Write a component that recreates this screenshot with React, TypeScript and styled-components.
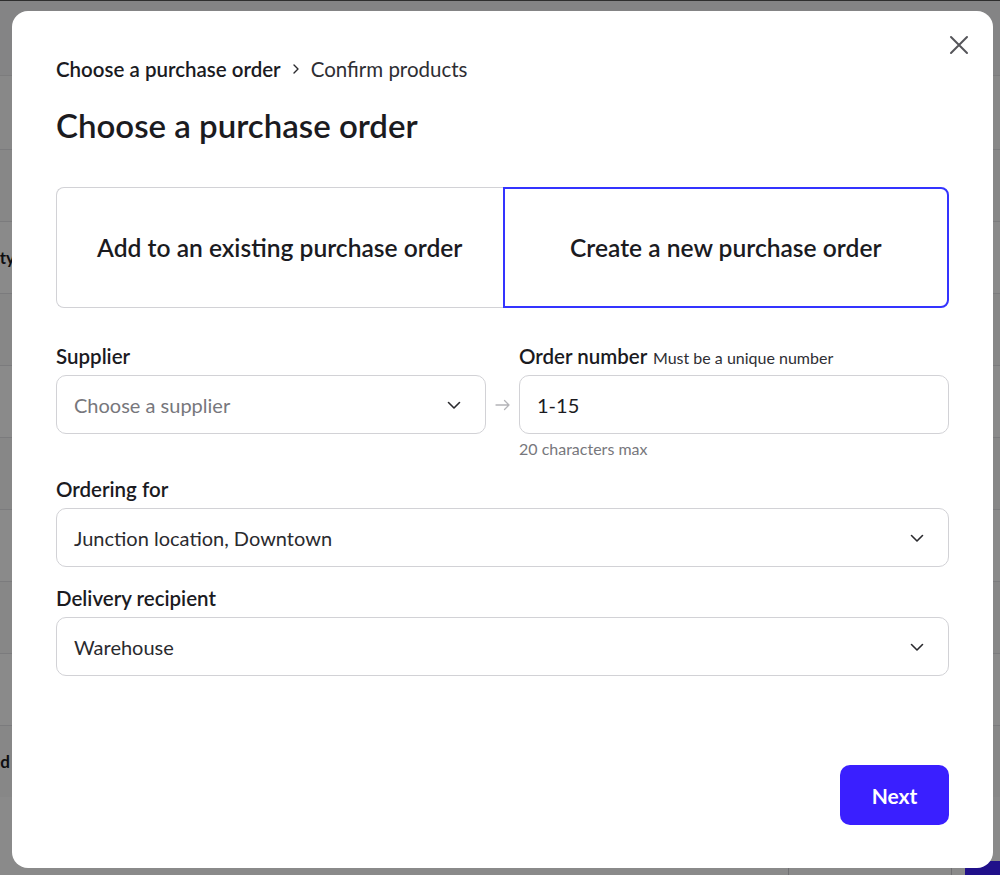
import styled, { createGlobalStyle } from 'styled-components';

const GlobalStyle = createGlobalStyle`
  * { box-sizing: border-box; }
  html, body { margin: 0; padding: 0; }
  body {
    font-family: Lato, "Noto Sans", "Liberation Sans", sans-serif;
    color: #1b1b1f;
    background: #ffffff;
    overflow: hidden;
  }
`;

const rows = [
  { label: '', edge: 13, key: 'r0' },
  { label: 'Quantity', edge: 15, key: 'r1' },
  { label: '', edge: 13, key: 'r2' },
  { label: '', edge: 13, key: 'r3' },
  { label: '', edge: 13, key: 'r4' },
  { label: '', edge: 13, key: 'r5' },
  { label: '', edge: 13, key: 'r6' },
  { label: '', edge: 13, key: 'r7' },
  { label: 'Received', edge: 10, key: 'r8' },
];

function ChevronDown() {
  return (
    <svg width="16" height="16" viewBox="0 0 16 16" fill="none">
      <path d="M2.5 5.5L8 11l5.5-5.5" stroke="#2a2a2e" strokeWidth="1.6" strokeLinecap="round" strokeLinejoin="round" />
    </svg>
  );
}

export default function App() {
  return (
    <>
      <GlobalStyle />
      <Page>
        <PageHeader>
          <PageLink>+ Add</PageLink>
        </PageHeader>
        <PageSub />
        <Table>
          {rows.map(r => (
            <TableRow key={r.key}>
              <Cell $edge={r.edge}>{r.label}</Cell>
            </TableRow>
          ))}
        </Table>
        <Footer>
          <GhostButton>Clear selection</GhostButton>
          <PrimaryPageButton>Create</PrimaryPageButton>
        </Footer>
      </Page>

      <Overlay>
        <Modal>
          <CloseButton aria-label="Close">
            <svg width="22" height="22" viewBox="0 0 22 22" fill="none">
              <path d="M3 3l16 16M19 3L3 19" stroke="#55555a" strokeWidth="2" strokeLinecap="round" />
            </svg>
          </CloseButton>

          <Breadcrumb>
            <Crumb $active>Choose a purchase order</Crumb>
            <CrumbSep>
              <svg width="10" height="12" viewBox="0 0 10 12" fill="none">
                <path d="M3 2l4 4-4 4" stroke="#2a2a2e" strokeWidth="1.4" strokeLinecap="round" strokeLinejoin="round" />
              </svg>
            </CrumbSep>
            <Crumb>Confirm products</Crumb>
          </Breadcrumb>

          <Title>Choose a purchase order</Title>

          <Choices>
            <Choice $side="left">Add to an existing purchase order</Choice>
            <Choice $side="right" $selected>Create a new purchase order</Choice>
          </Choices>

          <PairRow>
            <Field>
              <Label>Supplier</Label>
              <Select>
                <Placeholder>Choose a supplier</Placeholder>
                <ChevronDown />
              </Select>
            </Field>
            <Arrow>
              <svg width="16" height="12" viewBox="0 0 16 12" fill="none">
                <path d="M1 6h13M9.5 1.5L14 6l-4.5 4.5" stroke="#b4b4b8" strokeWidth="1.3" strokeLinecap="round" strokeLinejoin="round" />
              </svg>
            </Arrow>
            <Field>
              <Label>
                Order number <Hint>Must be a unique number</Hint>
              </Label>
              <Input>1-15</Input>
              <Helper>20 characters max</Helper>
            </Field>
          </PairRow>

          <Field $gap={17}>
            <Label>Ordering for</Label>
            <Select>
              <Value>Junction location, Downtown</Value>
              <ChevronDown />
            </Select>
          </Field>

          <Field $gap={18}>
            <Label>Delivery recipient</Label>
            <Select>
              <Value>Warehouse</Value>
              <ChevronDown />
            </Select>
          </Field>

          <Actions>
            <NextButton>Next</NextButton>
          </Actions>
        </Modal>
      </Overlay>
    </>
  );
}

/* underlying page */

const Page = styled.div`
  height: 100vh;
  display: flex;
  flex-direction: column;
  background: #ffffff;
`;

const PageHeader = styled.div`
  height: 75px;
  display: flex;
  justify-content: flex-end;
  align-items: flex-end;
  background: #f4f4f6;
`;

const PageLink = styled.span`
  color: #1a1ae0;
  font-size: 16px;
  font-weight: 700;
  margin-bottom: -18px;
  margin-right: -34px;
`;

const PageSub = styled.div`
  height: 74px;
  border-top: 1px solid #e6e6e8;
  background: #fbfbfc;
`;

const Table = styled.div`
  flex: 1;
  display: flex;
  flex-direction: column;
`;

const TableRow = styled.div`
  height: 72px;
  flex-shrink: 0;
  border-top: 1px solid #e4e4e7;
  display: flex;
  align-items: center;
  &:nth-child(odd) { background: #fafafa; }
`;

const Cell = styled.div<{ $edge: number }>`
  width: ${p => p.$edge}px;
  display: flex;
  justify-content: flex-end;
  white-space: nowrap;
  font-size: 17px;
  font-weight: 700;
  color: #1b1b1f;
`;

const Footer = styled.div`
  position: fixed;
  left: 0;
  right: 0;
  bottom: 0;
  height: 22px;
  display: flex;
  justify-content: flex-end;
  align-items: flex-start;
  gap: 13px;
  padding-top: 8px;
  margin-right: -62px;
  background: #ffffff;
`;

const GhostButton = styled.button`
  height: 48px;
  padding: 0 22px;
  border: 1px solid #cfcfd4;
  border-radius: 8px;
  background: #ffffff;
  font: 700 18px Lato, "Liberation Sans", sans-serif;
  color: #1b1b1f;
`;

const PrimaryPageButton = styled.button`
  height: 48px;
  padding: 0 22px;
  border: none;
  border-radius: 8px;
  background: #3b1fff;
  color: #ffffff;
  font: 700 18px Lato, "Liberation Sans", sans-serif;
`;

/* modal */

const Overlay = styled.div`
  position: fixed;
  inset: 0;
  background: rgba(0, 0, 0, 0.46);
  border-top: 1px solid #2e2e2e;
  padding: 10px 7px 7px 12px;
  display: flex;
`;

const Modal = styled.div`
  position: relative;
  flex: 1;
  background: #ffffff;
  border-radius: 16px;
  padding: 45px 44px 43px 44px;
  display: flex;
  flex-direction: column;
`;

const CloseButton = styled.button`
  position: absolute;
  top: 22px;
  right: 22px;
  width: 24px;
  height: 24px;
  padding: 0;
  border: none;
  background: none;
  display: flex;
  align-items: center;
  justify-content: center;
`;

const Breadcrumb = styled.div`
  display: flex;
  align-items: center;
  gap: 10px;
  font-size: 20.5px;
  line-height: 26px;
`;

const Crumb = styled.span<{ $active?: boolean }>`
  font-weight: ${p => (p.$active ? 600 : 400)};
  color: ${p => (p.$active ? '#1b1b1f' : '#2e2e33')};
`;

const CrumbSep = styled.span`
  display: flex;
  align-items: center;
`;

const Title = styled.h1`
  margin: 23px 0 0;
  font-size: 33px;
  line-height: 40px;
  font-weight: 600;
  color: #1b1b1f;
`;

const Choices = styled.div`
  margin-top: 42px;
  display: grid;
  grid-template-columns: 1fr 1fr;
  height: 121px;
`;

const Choice = styled.div<{ $side: 'left' | 'right'; $selected?: boolean }>`
  display: flex;
  align-items: center;
  justify-content: center;
  font-size: 24.6px;
  font-weight: 600;
  color: #1b1b1f;
  border: ${p => (p.$selected ? '2px solid #3434ff' : '1px solid #d2d2d6')};
  border-right: ${p => (p.$side === 'left' ? 'none' : undefined)};
  border-radius: ${p => (p.$side === 'left' ? '8px 0 0 8px' : '0 8px 8px 0')};
`;

const PairRow = styled.div`
  margin-top: 35px;
  display: grid;
  grid-template-columns: 1fr 33px 1fr;
`;

const Field = styled.div<{ $gap?: number }>`
  display: flex;
  flex-direction: column;
  margin-top: ${p => p.$gap ?? 0}px;
`;

const Label = styled.div`
  height: 26px;
  font-size: 20.5px;
  line-height: 26px;
  font-weight: 600;
  color: #1b1b1f;
  margin-bottom: 6px;
  white-space: nowrap;
`;

const Hint = styled.span`
  font-size: 16px;
  line-height: 1;
  font-weight: 400;
  color: #2e2e33;
  margin-left: 1px;
`;

const boxBase = `
  height: 59px;
  border: 1px solid #d2d2d6;
  border-radius: 10px;
  display: flex;
  align-items: center;
  padding: 0 23px 0 17px;
  font-size: 20px;
`;

const Select = styled.div`
  ${boxBase}
  justify-content: space-between;
`;

const Input = styled.div`
  ${boxBase}
  color: #1b1b1f;
`;

const Placeholder = styled.span`
  color: #77777c;
`;

const Value = styled.span`
  color: #2a2a2e;
`;

const Arrow = styled.div`
  height: 59px;
  margin-top: 32px;
  display: flex;
  align-items: center;
  justify-content: center;
`;

const Helper = styled.div`
  margin-top: 5px;
  font-size: 16px;
  line-height: 20px;
  color: #77777c;
`;

const Actions = styled.div`
  margin-top: auto;
  display: flex;
  justify-content: flex-end;
`;

const NextButton = styled.button`
  width: 109px;
  height: 60px;
  border: none;
  border-radius: 10px;
  background: #3a1fff;
  color: #ffffff;
  font: 700 21px Lato, "Liberation Sans", sans-serif;
`;
